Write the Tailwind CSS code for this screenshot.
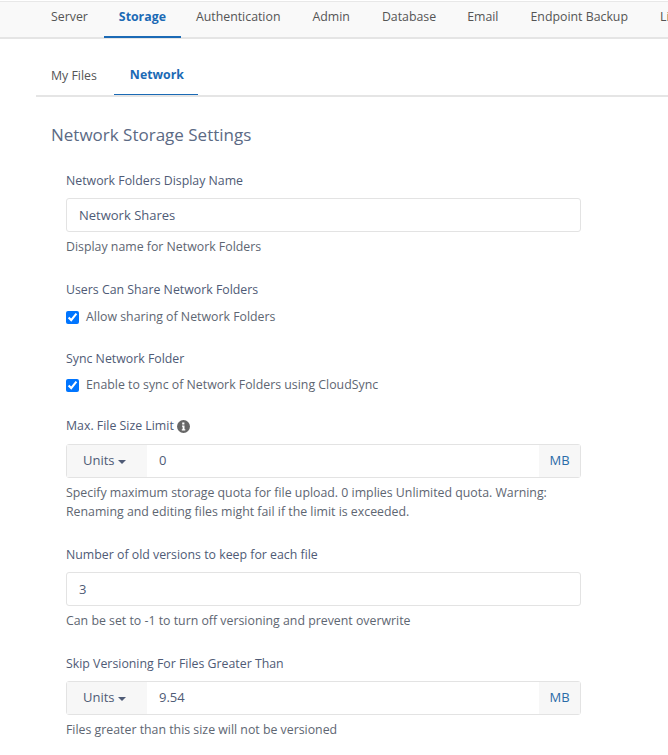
<!DOCTYPE html>
<html lang="en">
<head>
	<meta charset="UTF-8">
	<title>Network Storage Settings</title>
	<script src="https://cdn.jsdelivr.net/npm/@tailwindcss/browser@4"></script>
</head>
<body class="bg-white h-[755px] overflow-hidden font-['Open_Sans',sans-serif] text-[12.33px] text-[#4f5b76]">
	<!-- top tabs -->
	<div class="h-[38px] mt-px border-t border-t-[#e8e8e8] border-b-2 border-b-[#e5e5e5] bg-[#f9f9f9] pl-[35px] flex whitespace-nowrap overflow-x-clip text-[#555]">
		<a class="px-[16px] pt-[6px]">Server</a>
		<a class="px-[15px] pt-[6px] h-[36px] font-bold text-[#1b6ab5] border-b-2 border-[#1b6ab5]">Storage</a>
		<a class="px-[15px] pt-[6px]">Authentication</a>
		<a class="px-[17px] pt-[6px]">Admin</a>
		<a class="px-[15px] pt-[6px]">Database</a>
		<a class="pl-[16px] pr-[17px] pt-[6px]">Email</a>
		<a class="px-[15px] pt-[6px]">Endpoint Backup</a>
		<a class="px-[17px] pt-[6px]">License</a>
	</div>

	<!-- sub tabs -->
	<div class="ml-[36px] h-[58px] border-b-2 border-[#e5e5e5] flex text-[#555]">
		<a class="pl-[15px] pr-[17px] pt-[28px]">My Files</a>
		<a class="pl-[16px] pr-[14px] pt-[27px] h-[56px] font-bold text-[#1b6ab5] border-b border-[#1b6ab5]">Network</a>
	</div>

	<div class="pl-[51px] pt-[26px]">
		<h2 class="text-[17px] leading-[24px] text-[#5b6a84]">Network Storage Settings</h2>

		<div class="pl-[15px] w-[530px] mt-[25px]">
			<label class="block leading-[18px]">Network Folders Display Name</label>
			<div class="mt-[8px] h-[34px] border border-[#e3e3e3] rounded-[3px] px-[12px] pt-px flex items-center text-[13px]">Network Shares</div>
			<p class="mt-[6px] leading-[18px] text-[#5e6672]">Display name for Network Folders</p>

			<label class="block mt-[25px] leading-[18px]">Users Can Share Network Folders</label>
			<div class="mt-[9px] flex items-center h-[18px] text-[#5e6672]">
				<input type="checkbox" checked class="w-[13px] h-[13px] mr-[7px]">
				Allow sharing of Network Folders
			</div>

			<label class="block mt-[24px] leading-[18px]">Sync Network Folder</label>
			<div class="mt-[8px] flex items-center h-[18px] text-[#5e6672]">
				<input type="checkbox" checked class="w-[13px] h-[13px] mr-[7px]">
				Enable to sync of Network Folders using CloudSync
			</div>

			<label class="mt-[23px] leading-[18px] flex items-center">Max. File Size Limit
				<svg class="w-[13px] h-[13px] ml-[3px]" viewBox="0 0 13 13"><circle cx="6.5" cy="6.5" r="6.5" fill="#666"/><path d="M5.2 2.6h2.2v1.8H5.2zM5 5.6h2.5v3.7h.8v1.1H4.8V9.3h.8V6.7H5z" fill="#fff"/></svg>
			</label>
			<div class="mt-[9px] h-[34px] border border-[#e3e3e3] rounded-[3px] flex items-center text-[13px]">
				<div class="w-[80px] h-full bg-[#f7f7f7] pl-[16px] flex items-center">Units<span class="ml-[3px] mt-[1px] border-x-[4px] border-x-transparent border-t-[4px] border-t-[#4f5b76]"></span></div>
				<div class="flex-1 pl-[12px]">0</div>
				<div class="w-[41px] h-full bg-[#f7f7f7] flex items-center justify-center text-[#2a6ca8]">MB</div>
			</div>
			<p class="mt-[5px] leading-[19px] text-[#5e6672]">Specify maximum storage quota for file upload. 0 implies Unlimited quota. Warning: Renaming and editing files might fail if the limit is exceeded.</p>

			<label class="block mt-[25px] leading-[18px]">Number of old versions to keep for each file</label>
			<div class="mt-[8px] h-[34px] border border-[#e3e3e3] rounded-[3px] px-[12px] pt-px flex items-center text-[13px]">3</div>
			<p class="mt-[6px] leading-[18px] text-[#5e6672]">Can be set to -1 to turn off versioning and prevent overwrite</p>

			<label class="block mt-[25px] leading-[18px]">Skip Versioning For Files Greater Than</label>
			<div class="mt-[8px] h-[34px] border border-[#e3e3e3] rounded-[3px] flex items-center text-[13px]">
				<div class="w-[80px] h-full bg-[#f7f7f7] pl-[16px] flex items-center">Units<span class="ml-[3px] mt-[1px] border-x-[4px] border-x-transparent border-t-[4px] border-t-[#4f5b76]"></span></div>
				<div class="flex-1 pl-[12px]">9.54</div>
				<div class="w-[41px] h-full bg-[#f7f7f7] flex items-center justify-center text-[#2a6ca8]">MB</div>
			</div>
			<p class="mt-[6px] leading-[18px] text-[#5e6672]">Files greater than this size will not be versioned</p>
		</div>
	</div>
</body>
</html>
